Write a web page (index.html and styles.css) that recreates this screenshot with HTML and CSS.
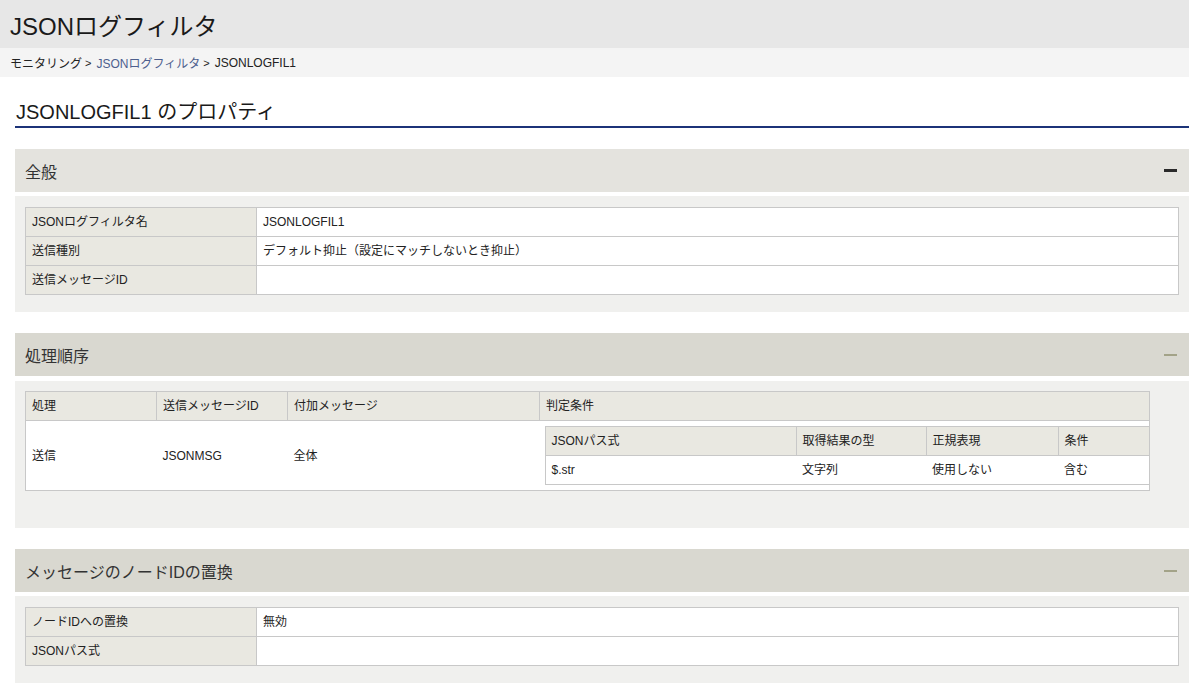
FILE: index.html
```html
<!DOCTYPE html>
<html lang="ja">
<head>
<meta charset="utf-8">
<title>JSONログフィルタ</title>
<link rel="stylesheet" href="styles.css">
</head>
<body>
<header class="page-header"><h1>JSONログフィルタ</h1></header>
<nav class="breadcrumb"><span>モニタリング</span><span class="sep">&gt;</span><a class="link">JSONログフィルタ</a><span class="sep">&gt;</span><span>JSONLOGFIL1</span></nav>
<main class="main">
  <h2 class="prop-title">JSONLOGFIL1 のプロパティ</h2>

  <section class="panel">
    <div class="panel-head active"><span>全般</span><span class="minus"></span></div>
    <div class="panel-body">
      <table class="kv">
        <tr><th>JSONログフィルタ名</th><td>JSONLOGFIL1</td></tr>
        <tr><th>送信種別</th><td>デフォルト抑止（設定にマッチしないとき抑止）</td></tr>
        <tr><th>送信メッセージID</th><td></td></tr>
      </table>
    </div>
  </section>

  <section class="panel">
    <div class="panel-head"><span>処理順序</span><span class="minus"></span></div>
    <div class="panel-body tall">
      <table class="grid outer">
        <colgroup><col class="c1"><col class="c2"><col class="c3"><col></colgroup>
        <tr><th>処理</th><th>送信メッセージID</th><th>付加メッセージ</th><th>判定条件</th></tr>
        <tr class="data">
          <td>送信</td><td>JSONMSG</td><td>全体</td>
          <td class="nest-cell">
            <table class="grid inner">
              <colgroup><col class="n1"><col class="n2"><col class="n3"><col></colgroup>
              <tr><th>JSONパス式</th><th>取得結果の型</th><th>正規表現</th><th>条件</th></tr>
              <tr><td>$.str</td><td>文字列</td><td>使用しない</td><td>含む</td></tr>
            </table>
          </td>
        </tr>
      </table>
    </div>
  </section>

  <section class="panel">
    <div class="panel-head"><span>メッセージのノードIDの置換</span><span class="minus"></span></div>
    <div class="panel-body">
      <table class="kv">
        <tr><th>ノードIDへの置換</th><td>無効</td></tr>
        <tr><th>JSONパス式</th><td></td></tr>
      </table>
    </div>
  </section>
</main>
</body>
</html>
```

FILE: styles.css
```css
html, body {
  margin: 0;
  padding: 0;
  background: #ffffff;
  color: #222;
  font-family: "Liberation Sans", Arial, "Noto Sans CJK JP", sans-serif;
}
.page-header {
  height: 48px;
  background: #e7e7e7;
  display: flex;
  align-items: center;
  padding-left: 10px;
}
.page-header h1 {
  margin: 0;
  font-size: 24px;
  font-weight: normal;
  color: #1a1a1a;
}
.breadcrumb {
  height: 29px;
  background: #f4f4f4;
  display: flex;
  align-items: center;
  padding-left: 10px;
  font-size: 12px;
  color: #222;
}
.breadcrumb .sep {
  margin: 0 5px 0 3px;
  font-size: 11px;
}
.breadcrumb .link {
  color: #4d5f8e;
}
.main {
  padding-left: 15px;
}
.prop-title {
  margin: 0;
  height: 51px;
  box-sizing: border-box;
  padding: 19px 0 0 1px;
  font-size: 20px;
  font-weight: normal;
  color: #1a1a1a;
  border-bottom: 2px solid #1c3378;
}
.panel {
  margin-top: 21px;
}
.panel-head {
  height: 43px;
  background: #d9d8d0;
  display: flex;
  align-items: center;
  justify-content: space-between;
  padding: 0 12px 0 10px;
  font-size: 16px;
  color: #333;
}
.panel-head.active {
  background: #e4e3de;
}
.minus {
  width: 13px;
  height: 2px;
  background: #a3a388;
}
.panel-head.active .minus {
  background: #2a2a2a;
  height: 3px;
}
.panel-body {
  margin-top: 4px;
  background: #f0f0ee;
  padding: 11px 10px 17px;
}
.panel-body.tall {
  margin-top: 5px;
  padding: 10px 10px 37px;
}
table {
  border-collapse: collapse;
  font-size: 12px;
  line-height: 16px;
  color: #222;
}
.kv {
  width: 100%;
  background: #fff;
}
.kv th, .kv td {
  height: 28px;
  padding: 0 6px;
  text-align: left;
  font-weight: normal;
  border: 1px solid #c8c8c8;
}
.kv th {
  width: 218px;
  background: #e9e8e1;
}
.grid {
  background: #fff;
  table-layout: fixed;
}
.grid th {
  height: 28px;
  padding: 0 6px;
  text-align: left;
  font-weight: normal;
  background: #e9e8e1;
  border: 1px solid #c8c8c8;
}
.grid td {
  padding: 0 6px;
  text-align: left;
  vertical-align: middle;
  border-top: 1px solid #c8c8c8;
  border-bottom: 1px solid #c8c8c8;
}
.grid.outer {
  width: 1125px;
  border: 1px solid #c8c8c8;
}
.outer .c1 { width: 131px; }
.outer .c2 { width: 131px; }
.outer .c3 { width: 252px; }
.outer td.nest-cell {
  padding: 5px 0 5px 5px;
}
.grid.inner {
  width: 100%;
  border: 1px solid #c8c8c8;
  border-right: none;
}
.inner th:last-child {
  border-right: none;
}
.inner .n1 { width: 251px; }
.inner .n2 { width: 130px; }
.inner .n3 { width: 132px; }
.inner td {
  height: 28px;
}
```
